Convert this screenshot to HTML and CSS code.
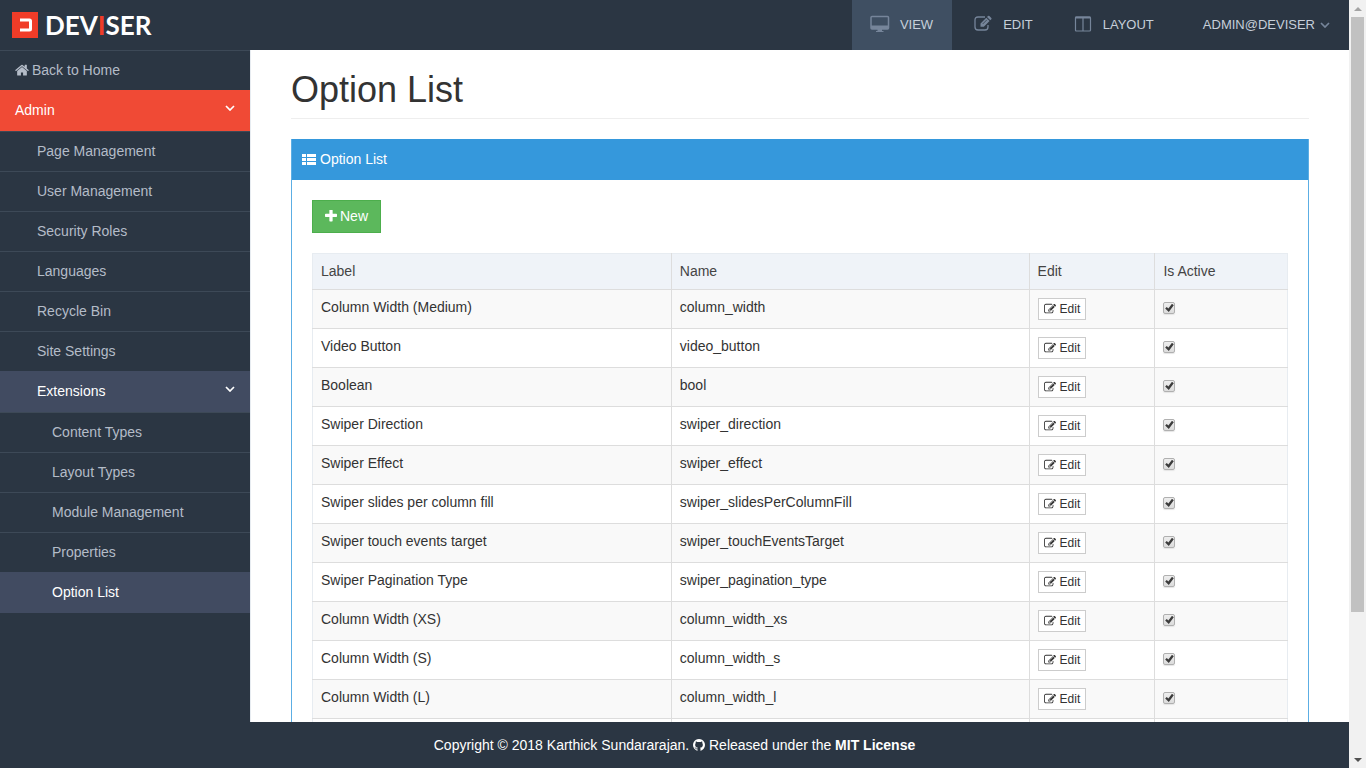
FILE: index.html
```html
<!DOCTYPE html>
<html lang="en">
<head>
<meta charset="utf-8">
<meta name="viewport" content="width=device-width, initial-scale=1">
<title>Option List - Deviser</title>
<link rel="stylesheet" href="styles.css">
</head>
<body>
<svg class="sprite" aria-hidden="true">
  <symbol id="i-home" viewBox="64 160 1664 1536"><path d="M1472 992v480q0 26-19 45t-45 19h-384v-384h-256v384h-384q-26 0-45-19t-19-45v-480q0-1 .5-3t.5-3l575-474 575 474q1 2 1 6zm223-69l-62 74q-8 9-21 11h-3q-13 0-21-7l-692-577-692 577q-12 8-24 7-13-2-21-11l-62-74q-8-10-7-23.5t11-21.5l719-599q32-26 76-26t76 26l244 204v-195q0-14 9-23t23-9h192q14 0 23 9t9 23v408l219 182q10 8 11 21.5t-7 23.5z"/></symbol>
  <symbol id="i-plus" viewBox="192 192 1408 1408"><path d="M1600 736v192q0 40-28 68t-68 28h-416v416q0 40-28 68t-68 28h-192q-40 0-68-28t-28-68v-416h-416q-40 0-68-28t-28-68v-192q0-40 28-68t68-28h416v-416q0-40 28-68t68-28h192q40 0 68 28t28 68v416h416q40 0 68 28t28 68z"/></symbol>
  <symbol id="i-edit" viewBox="0 0 1792 1792"><path d="M888 1184l116-116-152-152-116 116v56h96v96h56zm440-720q-16-16-33 1l-350 350q-17 17-1 33t33-1l350-350q17-17 1-33zm80 594v190q0 119-84.5 203.5t-203.5 84.5h-832q-119 0-203.5-84.5t-84.5-203.5v-832q0-119 84.5-203.5t203.5-84.5h832q63 0 117 25 15 7 18 23 3 17-9 29l-49 49q-14 14-32 8-23-6-45-6h-832q-66 0-113 47t-47 113v832q0 66 47 113t113 47h832q66 0 113-47t47-113v-126q0-13 9-22l64-64q15-15 35-7t20 29zm-96-738l288 288-672 672h-288v-288zm444 132l-92 92-288-288 92-92q28-28 68-28t68 28l152 152q28 28 28 68t-28 68z"/></symbol>
  <symbol id="i-github" viewBox="128 128 1536 1536"><path d="M896 128q209 0 385.500 103t279.500 279.500 103 385.500q0 251-146.500 451.500t-378.500 277.500q-27 5-40-7t-13-30q0-3 .5-76.500t.5-134.500q0-97-52-142 57-6 102.500-18t94-39 81-66.500 53-105 20.500-150.500q0-119-79-206 37-91-8-204-28-9-81 11t-92 44l-38 24q-93-26-192-26t-192 26q-16-11-42.500-27t-83.500-38.500-85-13.500q-45 113-8 204-79 87-79 206 0 85 20.500 150t52.500 105 80.500 67 94 39 102.500 18q-39 36-49 103-21 10-45 15t-57 5-65.500-21.500-55.500-62.500q-19-32-48.500-52t-49.500-24l-20-3q-21 0-29 4.500t-5 11.500 9 14 13 12l7 5q22 10 43.500 38t31.500 51l10 23q13 38 44 61.500t67 30 69.500 7 55.500-3.500l23-4q0 38 .5 88.500t.5 54.500q0 18-13 30t-40 7q-232-77-378.500-277.500t-146.500-451.500q0-209 103-385.500t279.500-279.500 385.500-103z"/></symbol>
  <symbol id="i-list" viewBox="0 0 14 11"><path d="M0 0h4v3H0zM5 0h9v3H5zM0 4h4v3H0zM5 4h9v3H5zM0 8h4v3H0zM5 8h9v3H5z"/></symbol>
  <symbol id="i-chevron" viewBox="0 0 10 6"><path d="M1 1l4 4 4-4" fill="none" stroke="currentColor" stroke-width="1.700"/></symbol>
</svg>

<div class="window">
  <div class="page">
    <header class="topbar">
      <a class="brand" href="#" aria-label="Deviser">
        <svg class="brand-mark" viewBox="0 0 26 26" aria-hidden="true"><path fill="#f03c28" d="M0 0h26v26H0z"/><path d="M8 8h9.500q1 0 1 1v8q0 1-1 1H8" fill="none" stroke="#fff" stroke-width="3"/></svg>
        <span class="brand-name">DEV<span class="brand-accent">I</span>SER</span>
      </a>
      <nav class="modes" aria-label="Page modes">
        <a class="mode mode-active" href="#"><svg class="mode-icon" viewBox="0 0 20 18" aria-hidden="true"><path fill="none" stroke="currentColor" stroke-width="1.500" d="M2 1.500h15.500q1 0 1 1V13q0 1-1 1H2q-1 0-1-1V2.500q0-1 1-1z"/><path d="M1 10.500h17.500V14H1zM7.500 14h4.500v2h1.500v1H6v-1h1.500z"/></svg>VIEW</a>
        <a class="mode" href="#"><svg class="mode-icon" viewBox="0 0 20 18" aria-hidden="true"><path fill="none" stroke="currentColor" stroke-width="1.300" d="M12 2H5Q2 2 2 5v7q0 3 3 3h7q3 0 3-3v-2"/><path d="M7.500 8.500L13.300 2.700l3.300 3.300-5.800 5.800H7.500zM14 2l1-1q.7-.7 1.400 0l1.900 1.900q.7.700 0 1.400l-1 1z"/><path d="M9.700 9L13.900 4.800" fill="none" stroke="#2b3643" stroke-width=".7"/></svg>EDIT</a>
        <a class="mode" href="#"><svg class="mode-icon" viewBox="0 0 20 18" aria-hidden="true"><path fill="none" stroke="currentColor" stroke-width="1.200" d="M3.500 2h13q1 0 1 1v12q0 1-1 1h-13q-1 0-1-1V3q0-1 1-1zM10 3v13"/><path d="M2.500 1.500h15V3.500h-15z"/></svg>LAYOUT</a>
        <button class="mode account" type="button">ADMIN@DEVISER<svg class="chevron" aria-hidden="true"><use href="#i-chevron"/></svg></button>
      </nav>
    </header>

    <div class="middle">
      <nav class="sidebar" aria-label="Administration">
        <ul class="menu">
          <li><a class="item" href="#"><svg class="icon" aria-hidden="true"><use href="#i-home"/></svg>Back to Home</a></li>
          <li>
            <button class="item item-root" type="button" aria-expanded="true">Admin<svg class="chevron" aria-hidden="true"><use href="#i-chevron"/></svg></button>
            <ul class="menu level-2">
              <li><a class="item" href="#">Page Management</a></li>
              <li><a class="item" href="#">User Management</a></li>
              <li><a class="item" href="#">Security Roles</a></li>
              <li><a class="item" href="#">Languages</a></li>
              <li><a class="item" href="#">Recycle Bin</a></li>
              <li><a class="item" href="#">Site Settings</a></li>
              <li>
                <button class="item item-active" type="button" aria-expanded="true">Extensions<svg class="chevron" aria-hidden="true"><use href="#i-chevron"/></svg></button>
                <ul class="menu level-3">
                  <li><a class="item" href="#">Content Types</a></li>
                  <li><a class="item" href="#">Layout Types</a></li>
                  <li><a class="item" href="#">Module Management</a></li>
                  <li><a class="item" href="#">Properties</a></li>
                  <li><a class="item item-active" href="#" aria-current="page">Option List</a></li>
                </ul>
              </li>
            </ul>
          </li>
        </ul>
      </nav>

      <main class="content">
        <h1 class="title">Option List</h1>
        <section class="panel">
          <h2 class="panel-heading"><svg class="list-icon" aria-hidden="true"><use href="#i-list"/></svg>Option List</h2>
          <div class="panel-body">
            <button class="btn-new" type="button"><svg class="plus-icon" aria-hidden="true"><use href="#i-plus"/></svg>New</button>
            <table class="options">
              <colgroup><col class="col-label"><col class="col-name"><col class="col-edit"><col class="col-active"></colgroup>
              <thead>
                <tr><th scope="col">Label</th><th scope="col">Name</th><th scope="col">Edit</th><th scope="col">Is Active</th></tr>
              </thead>
              <tbody>
                <tr><td>Column Width (Medium)</td><td>column_width</td><td><button class="btn-edit" type="button"><svg class="edit-icon" aria-hidden="true"><use href="#i-edit"/></svg>Edit</button></td><td><input class="check" type="checkbox" aria-label="column_width is active" checked></td></tr>
                <tr><td>Video Button</td><td>video_button</td><td><button class="btn-edit" type="button"><svg class="edit-icon" aria-hidden="true"><use href="#i-edit"/></svg>Edit</button></td><td><input class="check" type="checkbox" aria-label="video_button is active" checked></td></tr>
                <tr><td>Boolean</td><td>bool</td><td><button class="btn-edit" type="button"><svg class="edit-icon" aria-hidden="true"><use href="#i-edit"/></svg>Edit</button></td><td><input class="check" type="checkbox" aria-label="bool is active" checked></td></tr>
                <tr><td>Swiper Direction</td><td>swiper_direction</td><td><button class="btn-edit" type="button"><svg class="edit-icon" aria-hidden="true"><use href="#i-edit"/></svg>Edit</button></td><td><input class="check" type="checkbox" aria-label="swiper_direction is active" checked></td></tr>
                <tr><td>Swiper Effect</td><td>swiper_effect</td><td><button class="btn-edit" type="button"><svg class="edit-icon" aria-hidden="true"><use href="#i-edit"/></svg>Edit</button></td><td><input class="check" type="checkbox" aria-label="swiper_effect is active" checked></td></tr>
                <tr><td>Swiper slides per column fill</td><td>swiper_slidesPerColumnFill</td><td><button class="btn-edit" type="button"><svg class="edit-icon" aria-hidden="true"><use href="#i-edit"/></svg>Edit</button></td><td><input class="check" type="checkbox" aria-label="swiper_slidesPerColumnFill is active" checked></td></tr>
                <tr><td>Swiper touch events target</td><td>swiper_touchEventsTarget</td><td><button class="btn-edit" type="button"><svg class="edit-icon" aria-hidden="true"><use href="#i-edit"/></svg>Edit</button></td><td><input class="check" type="checkbox" aria-label="swiper_touchEventsTarget is active" checked></td></tr>
                <tr><td>Swiper Pagination Type</td><td>swiper_pagination_type</td><td><button class="btn-edit" type="button"><svg class="edit-icon" aria-hidden="true"><use href="#i-edit"/></svg>Edit</button></td><td><input class="check" type="checkbox" aria-label="swiper_pagination_type is active" checked></td></tr>
                <tr><td>Column Width (XS)</td><td>column_width_xs</td><td><button class="btn-edit" type="button"><svg class="edit-icon" aria-hidden="true"><use href="#i-edit"/></svg>Edit</button></td><td><input class="check" type="checkbox" aria-label="column_width_xs is active" checked></td></tr>
                <tr><td>Column Width (S)</td><td>column_width_s</td><td><button class="btn-edit" type="button"><svg class="edit-icon" aria-hidden="true"><use href="#i-edit"/></svg>Edit</button></td><td><input class="check" type="checkbox" aria-label="column_width_s is active" checked></td></tr>
                <tr><td>Column Width (L)</td><td>column_width_l</td><td><button class="btn-edit" type="button"><svg class="edit-icon" aria-hidden="true"><use href="#i-edit"/></svg>Edit</button></td><td><input class="check" type="checkbox" aria-label="column_width_l is active" checked></td></tr>
                <tr><td></td><td></td><td></td><td></td></tr>
              </tbody>
            </table>
          </div>
        </section>
      </main>
    </div>

    <footer class="footer">
      <p class="legal">Copyright © 2018 Karthick Sundararajan. <svg class="github-icon" aria-hidden="true"><use href="#i-github"/></svg> Released under the <a class="license" href="#">MIT License</a></p>
    </footer>
  </div>

  <div class="scrollbar" aria-hidden="true">
    <span class="arrow arrow-up"></span>
    <span class="track"><span class="thumb"></span></span>
    <span class="arrow arrow-down"></span>
  </div>
</div>
</body>
</html>
```
FILE: styles.css
```css
* { box-sizing: border-box; }

body {
  margin: 0;
  font: 14px/20px "Liberation Sans", Arial, sans-serif;
  color: #333;
  background: #fff;
}

a { color: inherit; text-decoration: none; }
button { font: inherit; color: inherit; cursor: pointer; border-radius: 0; }
svg { fill: currentColor; flex: none; }
.sprite { display: none; }

.window { display: flex; height: 100vh; overflow: hidden; }
.page { flex: 1; min-width: 0; display: flex; flex-direction: column; }

/* Top bar */
.topbar {
  display: flex;
  justify-content: space-between;
  height: 50px;
  flex: none;
  background: #2b3643;
  color: #c6cfda;
}
.brand { display: flex; align-items: center; gap: 7px; padding-left: 12px; }
.brand-mark { width: 26px; height: 26px; }
.brand-name { font: bold 26px/26px Lato, sans-serif; color: #fff; }
.brand-accent { color: #f03c28; }

.modes { display: flex; gap: 3px; }
.mode {
  display: flex;
  align-items: center;
  padding: 0 19px 0 18px;
  border: 0;
  background: none;
  font-size: 13px;
}
.mode-active { background: #3f4f62; }
.mode-icon { width: 20px; height: 18px; margin: 0 10px 2px 0; color: #76859a; }
.account { margin-left: 9px; gap: 5px; }

.chevron { width: 10px; height: 6px; }
.account .chevron { color: #76859a; }

/* Sidebar */
.middle { flex: 1; min-height: 0; display: flex; }
.sidebar { width: 250px; flex: none; background: #2b3643; color: #b4bcc8; overflow: hidden; }
.menu { list-style: none; margin: 0; padding: 0; }
.item {
  display: flex;
  align-items: center;
  width: 100%;
  padding: 9px 15px 10px;
  border: 0;
  border-top: 1px solid #3d4957;
  background: none;
  text-align: left;
}
.item .chevron { margin: 0 0 4px auto; }
.icon { width: 14px; height: 13px; margin-right: 3px; }
.level-2 .item { padding-left: 37px; }
.level-3 .item { padding-left: 52px; }
.item-root, .item-active { border-top: 0; padding-top: 10px; padding-bottom: 11px; color: #fff; }
.item-root { background: #f04a35; }
.item-active { background: #414b61; }

/* Content */
.content {
  flex: 1;
  min-width: 0;
  overflow: hidden;
  padding: 20px 40px 0;
  border-left: 1px solid #e7ecf1;
}
.title {
  margin: 0 0 20px;
  padding-bottom: 8px;
  border-bottom: 1px solid #eee;
  font-size: 36px;
  line-height: 40px;
  font-weight: normal;
}
.panel { border: 1px solid #5caee4; border-top: 0; }
.panel-heading {
  display: flex;
  align-items: center;
  gap: 4px;
  margin: 0;
  padding: 10px 10px 11px;
  background: #3598dc;
  color: #fff;
  font-size: 14px;
  line-height: 20px;
  font-weight: normal;
}
.list-icon { width: 14px; height: 11px; }
.panel-body { padding: 20px; }

.btn-new {
  display: flex;
  align-items: center;
  gap: 3px;
  padding: 5px 12px 6px;
  border: 1px solid #4cae4c;
  background: #5cb85c;
  color: #fff;
}
.plus-icon { width: 12px; height: 12px; }

.options {
  width: 100%;
  margin-top: 20px;
  border-collapse: collapse;
  table-layout: fixed;
  border: 1px solid #e7ecf1;
}
.col-label { width: 36.8%; }
.col-name { width: 36.7%; }
.col-edit { width: 12.9%; }
.options th, .options td {
  height: 39px;
  padding: 7px 8px 8px;
  text-align: left;
  vertical-align: top;
  border: 1px solid #ddd;
}
.options th {
  height: 36px;
  background: #eff3f8;
  font-weight: normal;
  color: #444;
}
.options tr > :first-child { border-left-color: #e7ecf1; }
.options tr > :last-child { border-right-color: #e7ecf1; }
.options thead th { border-top-color: #e7ecf1; }
.options tbody tr:nth-child(odd) { background: #f9f9f9; }

.btn-edit {
  display: flex;
  align-items: center;
  gap: 4px;
  height: 22px;
  margin-top: 1px;
  padding: 0 5px;
  border: 1px solid #ccc;
  background: #fff;
  font-size: 12px;
  line-height: 18px;
}
.edit-icon { width: 12px; height: 12px; }

.check {
  appearance: none;
  display: block;
  width: 12px;
  height: 12px;
  margin: 5px 0 0;
  border: 1px solid #b0b0b0;
  border-radius: 2px;
  background: linear-gradient(#eee, #dcdcdc);
  box-shadow: 0 1px 1px #e4e4e4;
}
.check:checked::before {
  content: "";
  display: block;
  height: 10px;
  background: #3c3c3c;
  clip-path: polygon(8% 54%, 24% 40%, 40% 56%, 76% 8%, 94% 22%, 44% 90%);
}

/* Footer */
.footer { flex: none; padding: 13px 0; background: #2b3643; color: #fff; text-align: center; }
.legal { margin: 0; }
.github-icon { width: 12px; height: 12px; vertical-align: -1px; }
.license { font-weight: bold; }

/* Scrollbar */
.scrollbar { width: 17px; flex: none; display: flex; flex-direction: column; background: #f1f1f1; }
.arrow { height: 17px; display: flex; align-items: center; justify-content: center; }
.arrow::before { content: ""; border: 4px solid transparent; }
.arrow-up::before { border-top: 0; border-bottom-color: #a3a3a3; }
.arrow-down::before { border-bottom: 0; border-top-color: #505050; }
.track { flex: 1; padding: 0 2px; }
.thumb { display: block; height: 81%; background: #c1c1c1; }
```
